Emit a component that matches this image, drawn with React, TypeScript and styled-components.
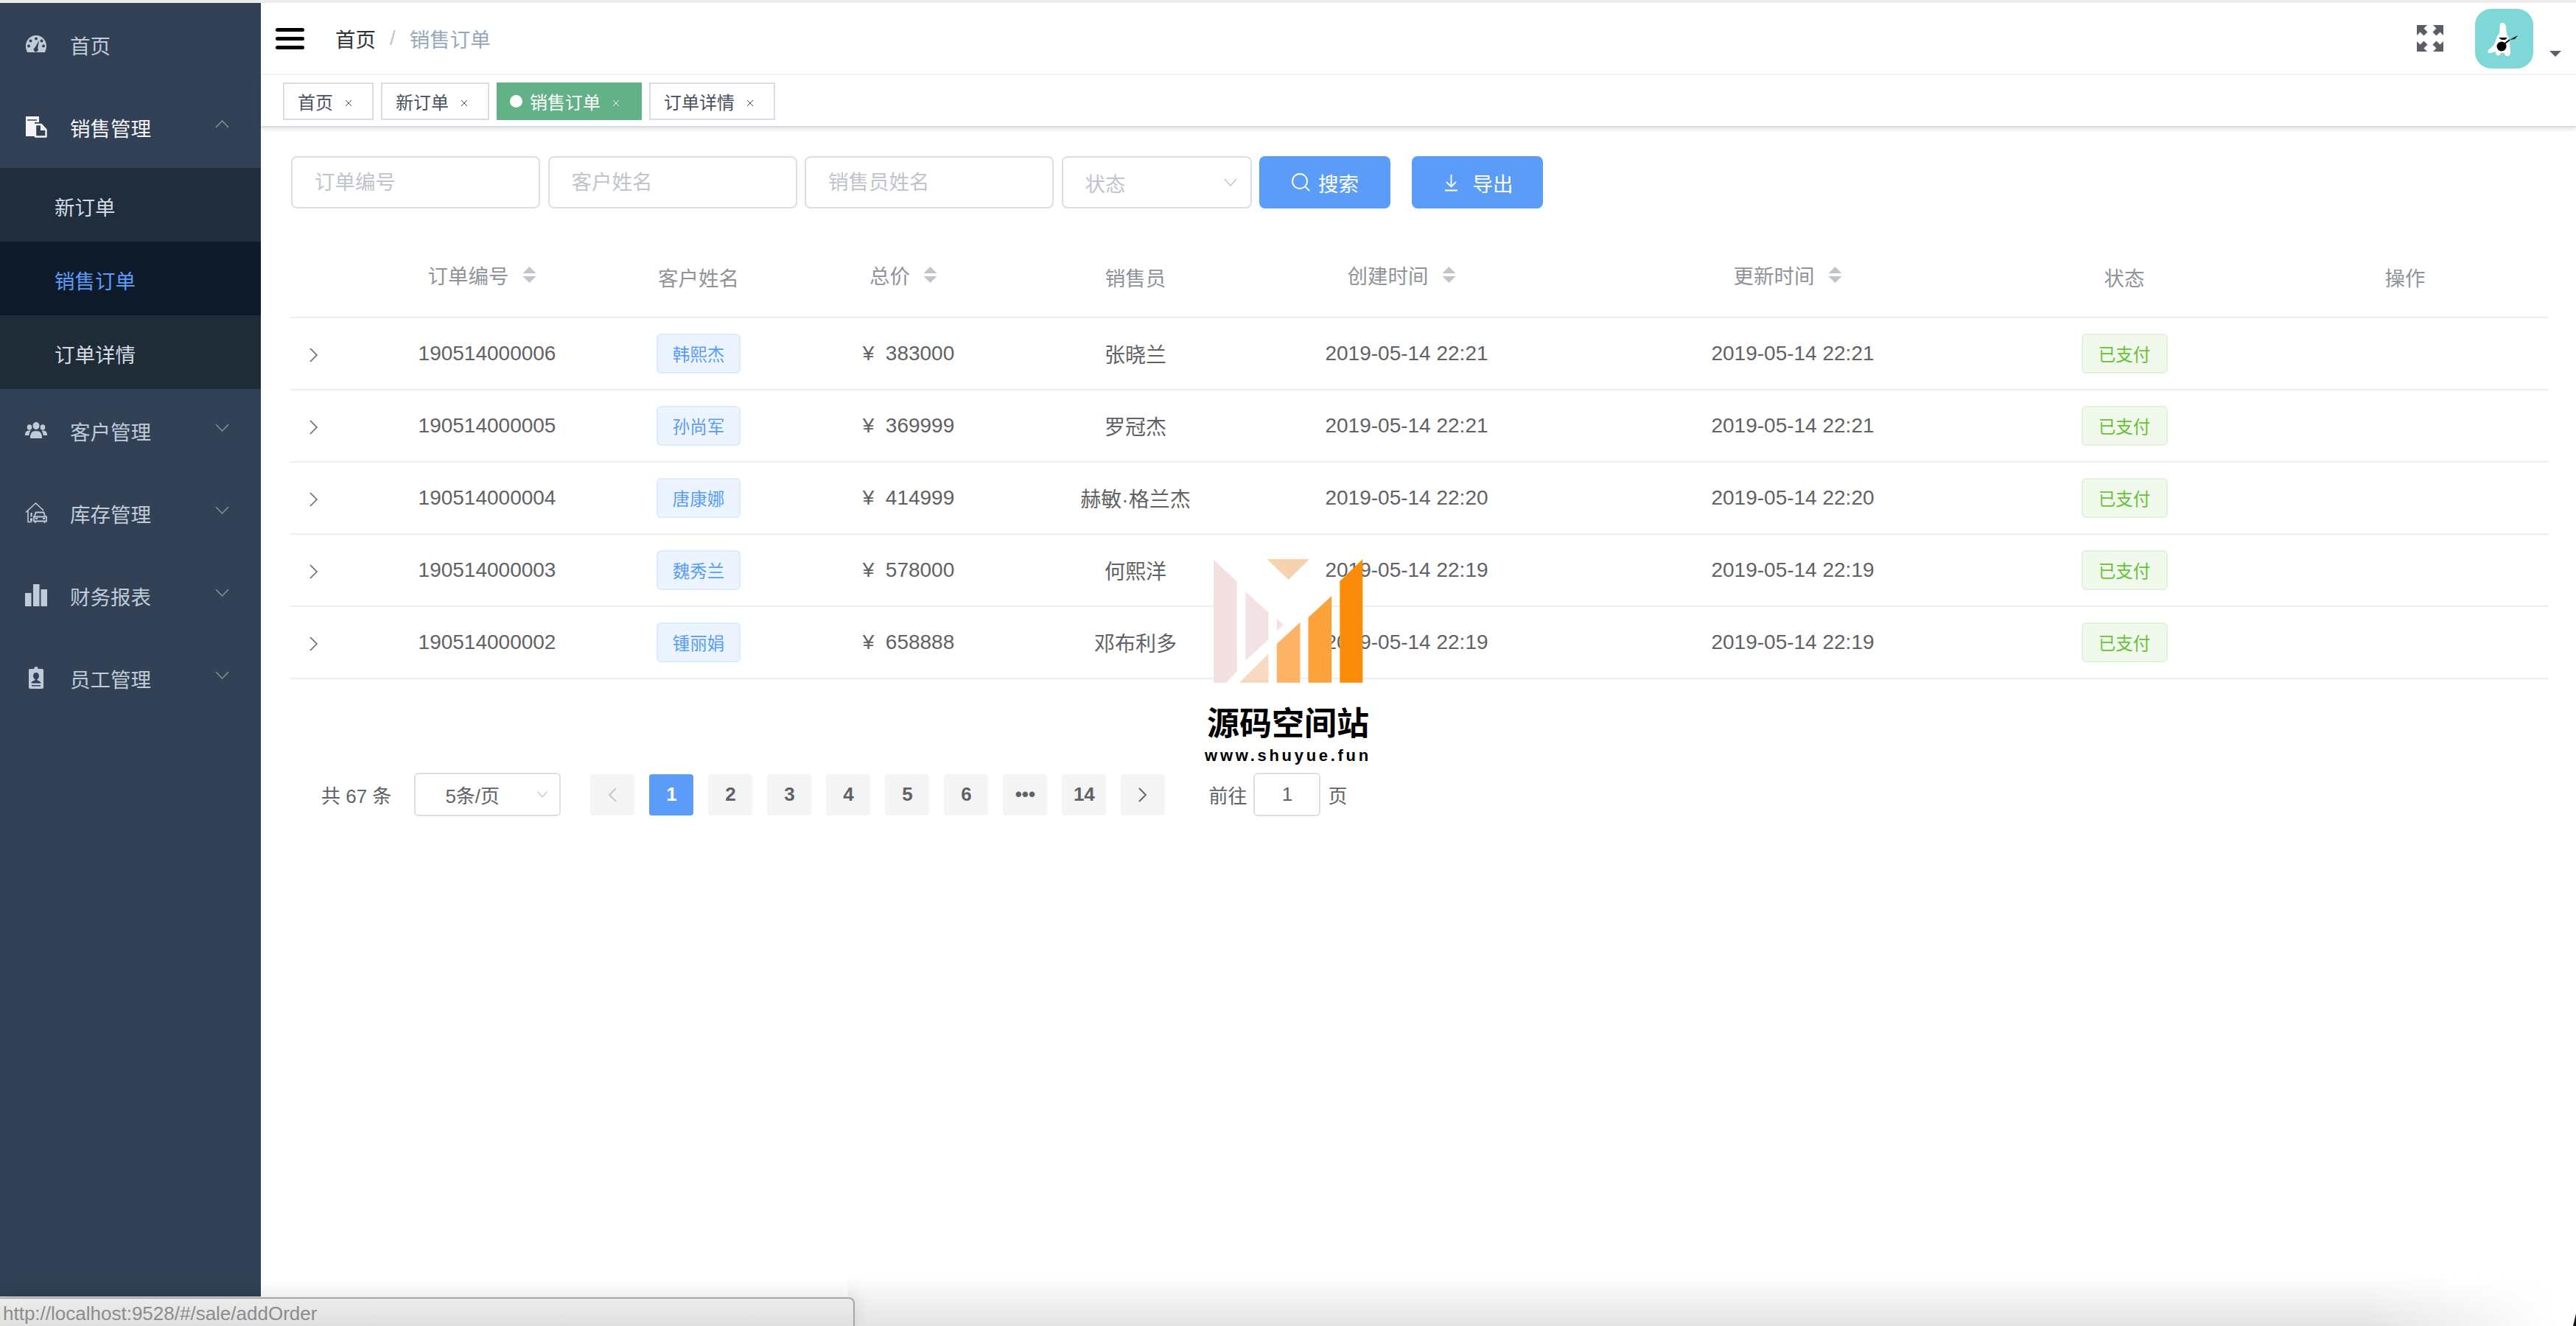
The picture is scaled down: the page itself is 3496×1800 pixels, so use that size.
import React from "react";
import styled, { createGlobalStyle, css } from "styled-components";

const FONT = `"Liberation Sans", "Noto Sans CJK SC", sans-serif`;

const GlobalStyle = createGlobalStyle`
  html, body {
    margin: 0;
    padding: 0;
    background: #fff;
    font-family: ${FONT};
    overflow: hidden;
  }
  * { box-sizing: border-box; }
`;

type IconName = "gauge" | "docs" | "people" | "house" | "chart" | "badge";

function MenuGlyph({ name }: { name: IconName }) {
  switch (name) {
    case "gauge":
      return (
        <MenuSvg viewBox="0 0 30 30">
          <path
            fill="currentColor"
            fillRule="evenodd"
            d="M15 3C7 3 1 9.500 1 17.500c0 3 .8 5.600 2 8.500h24c1.200-2.900 2-5.500 2-8.500C29 9.500 23 3 15 3zM15 5.500a2 2 0 1 1 0 4 2 2 0 0 1 0-4zM7.500 8.500a2 2 0 1 1 0 4 2 2 0 0 1 0-4zM22.500 8.500a2 2 0 1 1 0 4 2 2 0 0 1 0-4zM5 15.500a2 2 0 1 1 0 4 2 2 0 0 1 0-4zM25 15.500a2 2 0 1 1 0 4 2 2 0 0 1 0-4zM19 10l-1.800 10.500a3 3 0 1 1-3.900-.8z"
          />
        </MenuSvg>
      );
    case "docs":
      return (
        <MenuSvg viewBox="0 0 30 30">
          <path fill="currentColor" d="M1 1h18v8h-6v19H1z" />
          <path fill="none" stroke="#324155" strokeWidth="1.500" d="M3 6h13" />
          <path
            fill="#324155"
            stroke="currentColor"
            strokeWidth="2.400"
            strokeLinejoin="round"
            d="M14 12h8l6.500 7v9.500H14z"
          />
          <path fill="currentColor" d="M21 12l7 8h-7z" />
        </MenuSvg>
      );
    case "people":
      return (
        <MenuSvg viewBox="0 0 30 22">
          <g fill="currentColor">
            <ellipse cx="15" cy="5" rx="4.500" ry="5" />
            <path d="M7 22c0-7 2-10 8-10s8 3 8 10z" />
            <ellipse cx="6" cy="7" rx="3.300" ry="3.800" />
            <path d="M0 18c0-4.500 1.600-6.500 6-6.500 .6 0 1 0 1.500.2C6 14 5.500 15.500 5.500 18z" />
            <ellipse cx="24" cy="7" rx="3.300" ry="3.800" />
            <path d="M30 18c0-4.500-1.600-6.500-6-6.500-.6 0-1 0-1.500.2 1.500 2.300 2 3.800 2 6.300z" />
          </g>
        </MenuSvg>
      );
    case "house":
      return (
        <MenuSvg viewBox="0 0 30 29">
          <path
            fill="none"
            stroke="currentColor"
            strokeWidth="1.600"
            d="M1 14L14.500 1.500 25 11.500M4 12v15h5"
          />
          <path fill="currentColor" d="M7.500 14.500h2.200v5.500H7.500zM7 22h3v4H7z" />
          <path
            fill="none"
            stroke="currentColor"
            strokeWidth="1.800"
            d="M13 19l1.600-5h10.800l1.600 5M12 20h17v6H12zM14 26v2.500M26.500 26v2.500"
          />
          <path fill="currentColor" d="M14 21.500h3v2h-3zM24 21.500h3v2h-3z" />
        </MenuSvg>
      );
    case "chart":
      return (
        <MenuSvg viewBox="0 0 30 30">
          <path fill="currentColor" d="M0 12h8.500v18H0zM11 0h8.500v30H11zM21.500 7H30v23h-8.500z" />
        </MenuSvg>
      );
    case "badge":
      return (
        <MenuSvg viewBox="0 0 30 30">
          <path
            fill="currentColor"
            fillRule="evenodd"
            d="M7 3h5.500V1.500a2.500 1.500 0 0 1 5 0V3H23a2 2 0 0 1 2 2v23a2 2 0 0 1-2 2H7a2 2 0 0 1-2-2V5a2 2 0 0 1 2-2zM15 8c-2.500 0-4 2-4 4.500s1.400 4 2.500 4.500v1.500c-2 .7-5 1.500-5 4h13c0-2.500-3-3.300-5-4V17c1.100-.5 2.500-2 2.500-4.500S17.500 8 15 8zM9 25h12v1.500H9z"
          />
        </MenuSvg>
      );
  }
}

const MenuSvg = styled.svg`
  display: block;
  width: 30px;
  height: 30px;
`;

const MenuIconBox = styled.span`
  width: 30px;
  height: 30px;
  flex: none;
  margin-right: 31px;
  color: inherit;
  position: relative;
  top: -1px;
`;

const Arrow = ({ up }: { up?: boolean }) => (
  <ArrowSvg viewBox="0 0 19 11">
    <path d={up ? "M1 10L9.500 1 18 10" : "M1 1l8.500 9L18 1"} fill="none" stroke="currentColor" strokeWidth="1.500" />
  </ArrowSvg>
);

const ArrowSvg = styled.svg`
  position: absolute;
  right: 43px;
  top: 50%;
  width: 19px;
  height: 11px;
  margin-top: -9px;
  color: #8291a4;
`;

const Shell = styled.div`
  position: relative;
  width: 3496px;
  height: 1800px;
  display: flex;
  overflow: hidden;
  border-top: 4px solid #ececec;
  &::after {
    content: "";
    position: absolute;
    right: 0;
    bottom: 0;
    width: 4px;
    height: 17px;
    background: #111;
    clip-path: polygon(100% 0, 100% 100%, 0 100%);
    z-index: 8;
  }
`;

const Sidebar = styled.aside`
  flex: none;
  width: 354px;
  height: 1756px;
  background: #324155;
`;

const MenuRow = styled.div<{ $open?: boolean }>`
  position: relative;
  height: 112px;
  display: flex;
  align-items: center;
  padding: 2px 0 0 34px;
  font-size: 27.500px;
  color: ${(p) => (p.$open ? "#f4f4f5" : "#bfcbd9")};
`;

const SubRow = styled.div<{ $bg: string; $active?: boolean }>`
  height: 100px;
  display: flex;
  align-items: center;
  padding: 4px 0 0 74px;
  font-size: 27.500px;
  background: ${(p) => p.$bg};
  color: ${(p) => (p.$active ? "#5a9cf8" : "#d3dae3")};
`;

const Main = styled.main`
  flex: 1;
  min-width: 0;
  display: flex;
  flex-direction: column;
`;

const Navbar = styled.header`
  height: 98px;
  display: flex;
  align-items: center;
  padding: 0 0 0 20px;
  border-bottom: 2px solid #f6f6f6;
`;

const Burger = styled.div`
  width: 39px;
  height: 29px;
  display: flex;
  flex-direction: column;
  justify-content: space-between;
  margin-right: 42px;
  span {
    display: block;
    height: 5px;
    border-radius: 3px;
    background: #000;
  }
`;

const Crumbs = styled.nav`
  display: flex;
  align-items: center;
  font-size: 27.500px;
  color: #97a8be;
  flex: 1;
`;

const CrumbHome = styled.span`
  color: #303133;
`;

const CrumbSep = styled.span`
  margin: 0 19px;
  color: #c0c4cc;
`;

const ExpandSvg = styled.svg`
  width: 36px;
  height: 36px;
  color: #5a5e66;
  margin-right: 43px;
`;

const Avatar = styled.div`
  width: 79px;
  height: 81px;
  border-radius: 22px;
  background: #7fd7d7;
  overflow: hidden;
`;

const AvatarSvg = styled.svg`
  display: block;
  width: 79px;
  height: 81px;
`;

const Caret = styled.div`
  width: 0;
  height: 0;
  margin: 42px 20px 0 22px;
  border-left: 8px solid transparent;
  border-right: 8px solid transparent;
  border-top: 8px solid #5a5e66;
`;

const TagsBar = styled.div`
  height: 71px;
  display: flex;
  gap: 10px;
  padding: 10px 0 0 30px;
  border-bottom: 2px solid #d8dce5;
  box-shadow: 0 2px 6px rgba(0, 0, 0, 0.12);
`;

const Tab = styled.div<{ $active?: boolean }>`
  height: 51px;
  display: flex;
  align-items: center;
  padding: 0 ${(p) => (p.$active ? 28 : 27)}px 0 ${(p) => (p.$active ? 16 : 18)}px;
  font-size: 24px;
  border: 2px solid ${(p) => (p.$active ? "#62b187" : "#d8dce5")};
  background: ${(p) => (p.$active ? "#62b187" : "#fff")};
  color: ${(p) => (p.$active ? "#fff" : "#495060")};
`;

const TabDot = styled.span`
  width: 17px;
  height: 17px;
  border-radius: 50%;
  background: #fff;
  margin-right: 10px;
`;

const TabClose = styled.svg`
  width: 10px;
  height: 10px;
  margin: 5px 0 0 16px;
`;

const Content = styled.section`
  padding: 39px 37px 0 39px;
`;

const Filters = styled.div`
  display: flex;
  padding-left: 2px;
  gap: 10.500px;
`;

const field = css`
  height: 71px;
  border: 2px solid #dcdfe6;
  border-radius: 8px;
  background: #fff;
  font-family: ${FONT};
  font-size: 27.500px;
`;

const TextInput = styled.input`
  ${field}
  width: 338px;
  padding: 0 30px;
  outline: none;
  &::placeholder {
    color: #c0c4cc;
    opacity: 1;
  }
`;

const StatusSelect = styled.div`
  ${field}
  width: 258px;
  display: flex;
  align-items: center;
  justify-content: space-between;
  padding: 0 18px 0 30px;
  color: #c0c4cc;
`;

const SelectArrow = styled.svg<{ $small?: boolean }>`
  width: ${(p) => (p.$small ? 14 : 18)}px;
  height: ${(p) => (p.$small ? 9 : 11)}px;
  color: #c0c4cc;
`;

const FilterButton = styled.div<{ $gap?: number }>`
  width: 178px;
  height: 71px;
  border-radius: 8px;
  background: #5a9cf8;
  color: #fff;
  font-size: 27.500px;
  display: flex;
  align-items: center;
  justify-content: center;
  gap: ${(p) => p.$gap ?? 10}px;
  margin-left: ${(p) => (p.$gap ? 18 : 0)}px;
`;

const ButtonSvg = styled.svg`
  width: 27px;
  height: 27px;
`;

const tableGrid = css`
  display: grid;
  grid-template-columns: 66px 404px 170px 400px 216px 520px 528px 372px 390px;
  align-items: center;
  justify-items: center;
`;

const HeadRow = styled.div`
  ${tableGrid}
  height: 110px;
  margin-top: 39px;
  border-bottom: 2px solid #ebeef5;
  color: #909399;
  font-size: 27.500px;
`;

const HeadCell = styled.div<{ $sort?: boolean }>`
  display: flex;
  align-items: center;
  gap: 18px;
  margin-top: ${(p) => (p.$sort ? -6 : 0)}px;
  margin-right: ${(p) => (p.$sort ? 14 : 0)}px;
`;

const SortSvg = styled.svg`
  width: 19px;
  height: 22px;
  color: #c0c4cc;
`;

const BodyRow = styled.div`
  ${tableGrid}
  height: 98px;
  border-bottom: 2px solid #ebeef5;
  color: #606266;
  font-size: 28px;
`;

const Chevron = styled.svg`
  width: 12px;
  height: 20px;
  color: #606266;
  margin-top: 4px;
`;

const NameTag = styled.div`
  height: 54px;
  width: 114px;
  display: flex;
  align-items: center;
  justify-content: center;
  font-size: 23.500px;
  border: 2px solid #d9ecff;
  border-radius: 6px;
  background: #ecf5ff;
  color: #5a9cf8;
`;

const PaidTag = styled(NameTag)`
  width: 117px;
  border-color: #e1f3d8;
  background: #f0f9eb;
  color: #67c23a;
`;

const Pagination = styled.div`
  display: flex;
  align-items: center;
  height: 59px;
  margin-top: 127px;
  padding-left: 43px;
  font-size: 26px;
  color: #606266;
`;

const PageSize = styled.div`
  width: 199px;
  height: 59px;
  margin-left: 31px;
  border: 2px solid #dcdfe6;
  border-radius: 6px;
  display: flex;
  align-items: center;
  justify-content: space-between;
  padding: 0 16px 0 40px;
`;

const Pager = styled.div`
  display: flex;
  gap: 20px;
  margin-left: 40px;
`;

const PageButton = styled.div<{ $active?: boolean; $muted?: boolean }>`
  width: 60px;
  height: 56px;
  border-radius: 4px;
  display: flex;
  align-items: center;
  justify-content: center;
  font-size: 26px;
  font-weight: 700;
  background: ${(p) => (p.$active ? "#5a9cf8" : "#f4f4f5")};
  color: ${(p) => (p.$active ? "#fff" : p.$muted ? "#c0c4cc" : "#606266")};
`;

const PageArrow = styled.svg`
  width: 12px;
  height: 20px;
`;

const JumpLabel = styled.span<{ $gap: number }>`
  margin-left: ${(p) => p.$gap}px;
`;

const JumpInput = styled.div`
  width: 91px;
  height: 59px;
  margin-left: 9px;
  border: 2px solid #dcdfe6;
  border-radius: 6px;
  display: flex;
  align-items: center;
  justify-content: center;
`;

const Watermark = styled.div`
  position: absolute;
  left: 1628px;
  top: 755px;
  width: 240px;
  display: flex;
  flex-direction: column;
  align-items: center;
  color: #000;
  z-index: 5;
`;

const WatermarkLogo = styled.svg`
  display: block;
  width: 203px;
  height: 168px;
`;

const WatermarkTitle = styled.div`
  margin-top: 31px;
  font-size: 44px;
  line-height: 50px;
  font-weight: 700;
  white-space: nowrap;
`;

const WatermarkSite = styled.div`
  margin-top: 4px;
  font-size: 22px;
  line-height: 28px;
  font-weight: 700;
  letter-spacing: 3.700px;
  white-space: nowrap;
`;

const BottomShade = styled.div`
  position: absolute;
  left: 1150px;
  right: 0;
  bottom: 0;
  height: 70px;
  background: linear-gradient(to bottom, rgba(229, 229, 229, 0), #e4e4e4);
  -webkit-mask-image: linear-gradient(to right, #000 88%, transparent 99%);
  mask-image: linear-gradient(to right, #000 88%, transparent 99%);
  z-index: 6;
`;

const StatusBar = styled.div`
  position: absolute;
  left: 0;
  bottom: -4px;
  width: 1160px;
  height: 43px;
  padding: 5px 0 0 4px;
  border: 2px solid #a6a6a6;
  border-left: none;
  border-radius: 0 8px 0 0;
  background: linear-gradient(to bottom, #ececec, #dfdfdf);
  box-shadow: 0 -6px 24px rgba(0, 0, 0, 0.1);
  color: #8c8c8c;
  font-size: 26px;
  line-height: 30px;
  z-index: 7;
`;

const TABS = [
  { label: "首页" },
  { label: "新订单" },
  { label: "销售订单", active: true },
  { label: "订单详情" },
];

const COLUMNS = [
  { label: "" },
  { label: "订单编号", sort: true },
  { label: "客户姓名" },
  { label: "总价", sort: true },
  { label: "销售员" },
  { label: "创建时间", sort: true },
  { label: "更新时间", sort: true },
  { label: "状态" },
  { label: "操作" },
];

const ORDERS = [
  { id: "190514000006", customer: "韩熙杰", price: "¥\u00a0 383000", seller: "张晓兰", time: "2019-05-14 22:21" },
  { id: "190514000005", customer: "孙尚军", price: "¥\u00a0 369999", seller: "罗冠杰", time: "2019-05-14 22:21" },
  { id: "190514000004", customer: "唐康娜", price: "¥\u00a0 414999", seller: "赫敏·格兰杰", time: "2019-05-14 22:20" },
  { id: "190514000003", customer: "魏秀兰", price: "¥\u00a0 578000", seller: "何熙洋", time: "2019-05-14 22:19" },
  { id: "190514000002", customer: "锺丽娟", price: "¥\u00a0 658888", seller: "邓布利多", time: "2019-05-14 22:19" },
];

const PAGES = ["1", "2", "3", "4", "5", "6", "•••", "14"];

const SMALL_ARROW = "M1 1l9 9-9 9";

export default function App() {
  return (
    <>
      <GlobalStyle />
      <Shell>
        <Sidebar>
          <MenuRow>
            <MenuIconBox><MenuGlyph name="gauge" /></MenuIconBox>
            首页
          </MenuRow>
          <MenuRow $open>
            <MenuIconBox><MenuGlyph name="docs" /></MenuIconBox>
            销售管理
            <Arrow up />
          </MenuRow>
          <SubRow $bg="#1f2d3d">新订单</SubRow>
          <SubRow $bg="#0e1a2a" $active>销售订单</SubRow>
          <SubRow $bg="#1f2c38">订单详情</SubRow>
          <MenuRow>
            <MenuIconBox><MenuGlyph name="people" /></MenuIconBox>
            客户管理
            <Arrow />
          </MenuRow>
          <MenuRow>
            <MenuIconBox><MenuGlyph name="house" /></MenuIconBox>
            库存管理
            <Arrow />
          </MenuRow>
          <MenuRow>
            <MenuIconBox><MenuGlyph name="chart" /></MenuIconBox>
            财务报表
            <Arrow />
          </MenuRow>
          <MenuRow>
            <MenuIconBox><MenuGlyph name="badge" /></MenuIconBox>
            员工管理
            <Arrow />
          </MenuRow>
        </Sidebar>

        <Main>
          <Navbar>
            <Burger><span /><span /><span /></Burger>
            <Crumbs>
              <CrumbHome>首页</CrumbHome>
              <CrumbSep>/</CrumbSep>
              销售订单
            </Crumbs>
            <ExpandSvg viewBox="0 0 36 36">
              <path
                fill="currentColor"
                d="M0 0h14l-4.500 4.500 5 5-5 5-5-5L0 14zM36 0H22l4.500 4.500-5 5 5 5 5-5L36 14zM0 36h14l-4.500-4.500 5-5-5-5-5 5L0 22zM36 36H22l4.500-4.500-5-5 5-5 5 5L36 22z"
              />
            </ExpandSvg>
            <Avatar>
              <AvatarSvg viewBox="0 0 79 81">
                <path
                  fill="#fff"
                  d="M34 20c3-2 7-1 8 4l1 11c3 3 4 7 4 12l1 12c0 4-2 6-5 5-2 0-3-2-3-4h-5c-1 3-3 4-5 3-2-1-2-3-2-5l-7 2c-3 1-5-2-3-4 3-3 7-5 9-10 2-6 3-10 6-13l1-13z"
                />
                <circle cx="36" cy="51" r="6.500" fill="#000" />
                <path d="M38 49l9-7" stroke="#000" strokeWidth="2" />
                <path d="M47 42l11-6-4 5z" fill="#000" />
                <path d="M32 39h12l-3 3h-5z" fill="#000" />
              </AvatarSvg>
            </Avatar>
            <Caret />
          </Navbar>

          <TagsBar>
            {TABS.map((tab) => (
              <Tab key={tab.label} $active={tab.active}>
                {tab.active && <TabDot />}
                {tab.label}
                <TabClose viewBox="0 0 10 10">
                  <path d="M1 1l8 8M9 1L1 9" stroke={tab.active ? "#fff" : "#495060"} strokeWidth="1" fill="none" />
                </TabClose>
              </Tab>
            ))}
          </TagsBar>

          <Content>
            <Filters>
              <TextInput placeholder="订单编号" readOnly />
              <TextInput placeholder="客户姓名" readOnly />
              <TextInput placeholder="销售员姓名" readOnly />
              <StatusSelect>
                状态
                <SelectArrow viewBox="0 0 18 11">
                  <path d="M1 1l8 9 8-9" fill="none" stroke="currentColor" strokeWidth="1.500" />
                </SelectArrow>
              </StatusSelect>
              <FilterButton>
                <ButtonSvg viewBox="0 0 27 27">
                  <circle cx="12" cy="12" r="10" fill="none" stroke="#fff" strokeWidth="1.800" />
                  <path d="M19 19l6 6" stroke="#fff" strokeWidth="1.800" />
                </ButtonSvg>
                搜索
              </FilterButton>
              <FilterButton $gap={16}>
                <ButtonSvg viewBox="0 0 27 27">
                  <path d="M13.500 3v16M7 13l6.500 6.500L20 13M5 24.500h17" fill="none" stroke="#fff" strokeWidth="1.800" />
                </ButtonSvg>
                导出
              </FilterButton>
            </Filters>

            <HeadRow>
              {COLUMNS.map((col, i) => (
                <HeadCell key={i} $sort={col.sort}>
                  {col.label}
                  {col.sort && (
                    <SortSvg viewBox="0 0 18 22">
                      <path fill="currentColor" d="M9 0l9 9H0zM9 22l9-9H0z" />
                    </SortSvg>
                  )}
                </HeadCell>
              ))}
            </HeadRow>

            {ORDERS.map((order) => (
              <BodyRow key={order.id}>
                <Chevron viewBox="0 0 12 20">
                  <path d={SMALL_ARROW} fill="none" stroke="currentColor" strokeWidth="1.500" />
                </Chevron>
                <div>{order.id}</div>
                <NameTag>{order.customer}</NameTag>
                <div>{order.price}</div>
                <div>{order.seller}</div>
                <div>{order.time}</div>
                <div>{order.time}</div>
                <PaidTag>已支付</PaidTag>
                <div />
              </BodyRow>
            ))}

            <Pagination>
              共 67 条
              <PageSize>
                5条/页
                <SelectArrow $small viewBox="0 0 14 9">
                  <path d="M1 1l6 7 6-7" fill="none" stroke="currentColor" strokeWidth="1.300" />
                </SelectArrow>
              </PageSize>
              <Pager>
                <PageButton $muted>
                  <PageArrow viewBox="0 0 12 20">
                    <path d="M11 1l-9 9 9 9" fill="none" stroke="currentColor" strokeWidth="1.800" />
                  </PageArrow>
                </PageButton>
                {PAGES.map((page) => (
                  <PageButton key={page} $active={page === "1"}>
                    {page}
                  </PageButton>
                ))}
                <PageButton>
                  <PageArrow viewBox="0 0 12 20">
                    <path d={SMALL_ARROW} fill="none" stroke="currentColor" strokeWidth="1.800" />
                  </PageArrow>
                </PageButton>
              </Pager>
              <JumpLabel $gap={59}>前往</JumpLabel>
              <JumpInput>1</JumpInput>
              <JumpLabel $gap={10}>页</JumpLabel>
            </Pagination>
          </Content>
        </Main>

        <Watermark>
          <WatermarkLogo viewBox="200 118 608 503">
            <path fill="#fff" d="M200 118h440v182l-54 55-34 20v245H200z" />
            <path fill="#f3e0e1" d="M200 120l95 90v365l-45 45h-50z" />
            <path fill="#f3e2e4" d="M330 250l93 85v110l-93 85zM457 360l28 25-28 27z" />
            <path fill="#f7d2af" d="M418 118h172l-86 84z" />
            <path fill="#f8d8bf" d="M305 620l118-117v117z" />
            <path fill="#fdb366" d="M457 462l95-87v245h-95z" />
            <path fill="#fba23a" d="M585 355l95-87v352h-95z" />
            <path fill="#fb8c0a" d="M713 208l93-90v502h-93z" />
          </WatermarkLogo>
          <WatermarkTitle>源码空间站</WatermarkTitle>
          <WatermarkSite>www.shuyue.fun</WatermarkSite>
        </Watermark>

        <BottomShade />
        <StatusBar>http://localhost:9528/#/sale/addOrder</StatusBar>
      </Shell>
    </>
  );
}
